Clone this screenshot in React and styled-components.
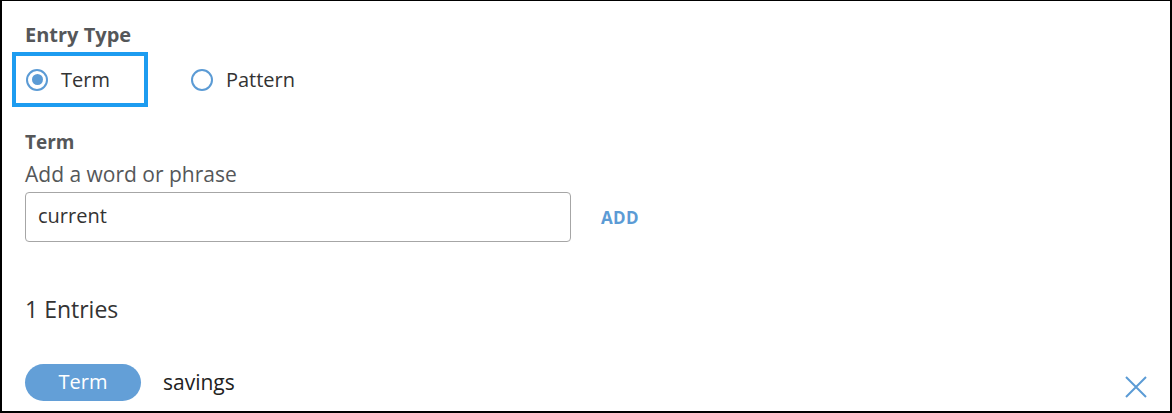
import React from "react";
import styled, { createGlobalStyle } from "styled-components";

const Global = createGlobalStyle`
  html, body { margin: 0; padding: 0; background: #fff; }
  body { font-family: "Open Sans", "Liberation Sans", Arial, sans-serif; }
  * { box-sizing: border-box; }
`;

const Frame = styled.div`
  width: 1172px;
  height: 413px;
  border: 2px solid #000;
  border-top-width: 1px;
  overflow: hidden;
  padding: 22px 23px 0 23px;
  display: flex;
  flex-direction: column;
  color: #333;
`;

const SectionTitle = styled.div`
  font-weight: 700;
  font-size: ${(p) => p.size || 20}px;
  line-height: 24px;
  color: #555759;
  margin-top: ${(p) => p.mt || 0}px;
`;

const RadioGroup = styled.div`
  display: flex;
  align-items: center;
  gap: 29px;
  margin-top: 5px;
  margin-left: -13px;
`;

const Option = styled.label`
  display: flex;
  align-items: center;
  gap: 13px;
  height: 55px;
  padding: 0 34px 0 10px;
  border: 4px solid ${(p) => (p.focused ? "#1d9cf0" : "transparent")};
  font-size: 20px;
  color: #333;
  cursor: pointer;
`;

const Circle = styled.span`
  width: 22px;
  height: 22px;
  border-radius: 50%;
  border: 2.5px solid #5b9bd5;
  display: flex;
  align-items: center;
  justify-content: center;
  flex: none;
  &::after {
    content: "";
    width: 11px;
    height: 11px;
    border-radius: 50%;
    background: ${(p) => (p.checked ? "#5b9bd5" : "transparent")};
  }
`;

const Hint = styled.div`
  font-size: 21px;
  line-height: 26px;
  color: #555759;
  margin-top: 7px;
`;

const InputRow = styled.div`
  display: flex;
  align-items: center;
  gap: 30px;
  margin-top: 5px;
`;

const TextInput = styled.input`
  width: 546px;
  height: 50px;
  border: 1px solid #a6a6a6;
  border-radius: 4px;
  padding: 0 12px 3px;
  font-family: "Open Sans", "Liberation Sans", Arial, sans-serif;
  font-size: 20px;
  color: #333;
  outline: none;
  background: #fff;
`;

const AddButton = styled.button`
  border: none;
  background: none;
  padding: 0;
  font-family: "Open Sans", "Liberation Sans", Arial, sans-serif;
  font-weight: 700;
  font-size: 17px;
  color: #5b9bd5;
  letter-spacing: 0.3px;
  cursor: pointer;
`;

const Count = styled.div`
  font-size: 23px;
  line-height: 28px;
  color: #333;
  margin-top: 53px;
`;

const EntryRow = styled.div`
  display: flex;
  align-items: center;
  margin-top: 41px;
`;

const Pill = styled.span`
  width: 116px;
  height: 37px;
  border-radius: 19px;
  background: #639fd7;
  color: #fff;
  font-size: 20px;
  display: flex;
  align-items: center;
  justify-content: center;
  padding-bottom: 2px;
  flex: none;
`;

const EntryText = styled.span`
  font-size: 21px;
  color: #222;
  margin-left: 22px;
  flex: 1;
  padding-bottom: 2px;
`;

const RemoveButton = styled.button`
  border: none;
  background: none;
  padding: 0;
  width: 22px;
  height: 22px;
  margin-top: 8px;
  display: flex;
  cursor: pointer;
`;

export default function App() {
  return (
    <>
      <Global />
      <Frame>
        <SectionTitle>Entry Type</SectionTitle>
        <RadioGroup>
          <Option focused>
            <Circle checked />
            Term
          </Option>
          <Option>
            <Circle />
            Pattern
          </Option>
        </RadioGroup>
        <SectionTitle size={19} mt={23}>Term</SectionTitle>
        <Hint>Add a word or phrase</Hint>
        <InputRow>
          <TextInput defaultValue="current" readOnly />
          <AddButton>ADD</AddButton>
        </InputRow>
        <Count>1 Entries</Count>
        <EntryRow>
          <Pill>Term</Pill>
          <EntryText>savings</EntryText>
          <RemoveButton aria-label="Remove">
            <svg width="22" height="22" viewBox="0 0 22 22">
              <path d="M1 1 L21 21 M21 1 L1 21" stroke="#5b9bd5" strokeWidth="2" fill="none" />
            </svg>
          </RemoveButton>
        </EntryRow>
      </Frame>
    </>
  );
}
